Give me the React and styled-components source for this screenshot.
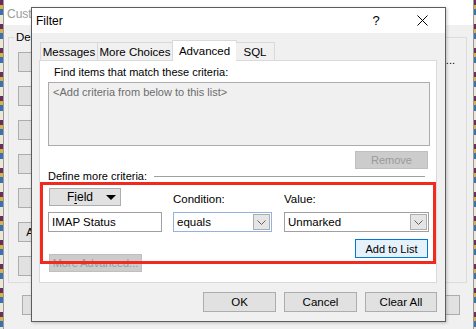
import React from "react";
import styled, { createGlobalStyle } from "styled-components";

const GlobalStyle = createGlobalStyle`
  html, body { margin: 0; padding: 0; }
  body {
    width: 476px;
    height: 329px;
    overflow: hidden;
    font-family: "Liberation Sans", Arial, sans-serif;
    font-size: 11px;
    color: #000;
  }
  * { box-sizing: border-box; }
`;

const Desktop = styled.div`
  position: relative;
  width: 476px;
  height: 329px;
  overflow: hidden;
  background: repeating-linear-gradient(
    180deg,
    #6a2d5c 0 5px,
    #d8b23c 5px 9px,
    #3b70b2 9px 15px,
    #ece6d6 15px 24px
  );
`;

/* ---------- window behind ---------- */

const BackWindow = styled.div`
  position: absolute;
  left: 3px;
  top: 0;
  width: 471px;
  height: 340px;
  border-left: 1px solid #9a9a9a;
  border-right: 1px solid #9a9a9a;
  background: #f0f0f0;
  display: flex;
  flex-direction: column;
`;

const BackTitle = styled.div`
  height: 25px;
  flex: none;
  background: #fff;
  padding-left: 3px;
  font-size: 12px;
  line-height: 28px;
  color: #9b9b9b;
`;

const BackBody = styled.div`
  padding: 5px 6px 0 4px;
  display: flex;
  flex-direction: column;
  gap: 12px;
`;

const GroupBox = styled.fieldset`
  margin: 0;
  height: 253px;
  border: 1px solid #dcdcdc;
  padding: 8px 9px 0 9px;
  display: flex;
  flex-direction: column;
  gap: 14px;
  background: #f0f0f0;

  legend {
    padding: 0 2px;
    margin-left: -4px;
    line-height: 14px;
    font-size: 11.5px;
  }
`;

const BackRow = styled.div`
  display: flex;
  align-items: center;
  justify-content: space-between;
  height: 20px;
`;

const BackButton = styled.div`
  width: 130px;
  height: 20px;
  border: 1px solid #adadad;
  background-color: #e1e1e1;
  display: flex;
  align-items: center;
  justify-content: center;
  white-space: nowrap;
  overflow: hidden;
`;

const Ellipsis = styled.span`
  margin-right: 2px;
  padding-bottom: 4px;
`;

const BackFooter = styled.div`
  display: flex;
  justify-content: space-between;
  padding: 0 7px 0 14px;
`;

/* ---------- filter dialog ---------- */

const Dialog = styled.div`
  position: absolute;
  left: 31px;
  top: 7px;
  width: 415px;
  height: 315px;
  border: 1px solid #5c5c5c;
  background: #f0f0f0;
  box-shadow: 1px 1px 3px rgba(0, 0, 0, 0.22);
  display: flex;
  flex-direction: column;
`;

const TitleBar = styled.div`
  height: 25px;
  flex: none;
  background: #fff;
  display: flex;
  align-items: center;
`;

const Title = styled.span`
  flex: 1;
  padding-left: 4px;
  font-size: 12px;
`;

const CaptionButton = styled.div`
  width: 46px;
  height: 25px;
  display: flex;
  align-items: center;
  justify-content: center;
  font-size: 13px;
`;

const DialogBody = styled.div`
  flex: 1;
  display: flex;
  flex-direction: column;
  padding: 7px 8px 9px 7px;
`;

const TabList = styled.div`
  display: flex;
  align-items: flex-end;
  height: 20px;
  padding-left: 1px;
  position: relative;
  z-index: 1;
`;

const Tab = styled.div`
  width: ${(p) => p.$w}px;
  height: ${(p) => (p.$active ? 21 : 18)}px;
  margin-bottom: ${(p) => (p.$active ? -1 : 0)}px;
  margin-left: ${(p) => (p.$active ? -1 : 0)}px;
  margin-right: ${(p) => (p.$active ? -1 : 0)}px;
  border: 1px solid #d9d9d9;
  border-bottom: none;
  border-left: ${(p) => (p.$first || p.$active ? "1px solid #d9d9d9" : "none")};
  background: ${(p) => (p.$active ? "#fff" : "#f0f0f0")};
  display: flex;
  align-items: center;
  justify-content: center;
  padding-top: ${(p) => (p.$active ? 0 : 1)}px;
  font-size: 11.5px;
  white-space: nowrap;
`;

const Panel = styled.div`
  flex: 1;
  background: #fff;
  border: 1px solid #d9d9d9;
  padding: 4px 6px 9px 8px;
  display: flex;
  flex-direction: column;
`;

const Caption = styled.div`
  line-height: 15px;
  height: 15px;
  padding-left: 6px;
  margin-bottom: 2px;
`;

const CriteriaList = styled.div`
  height: 64px;
  flex: none;
  border: 1px solid #acacac;
  background: #f0f0f0;
  color: #6d6d6d;
  padding: 2px 4px;
  line-height: 15px;
`;

const PushButton = styled.div`
  width: ${(p) => p.$w}px;
  height: ${(p) => p.$h || 20}px;
  flex: none;
  border: 1px solid
    ${(p) => (p.$disabled ? "#bfbfbf" : p.$default ? "#0078d7" : "#adadad")};
  background: ${(p) =>
    p.$disabled ? "#cccccc" : p.$default ? "#e5f1fb" : "#e1e1e1"};
  color: ${(p) => (p.$disabled ? "#9a9a9a" : "#000")};
  display: flex;
  align-items: center;
  justify-content: center;
  white-space: nowrap;
  overflow: hidden;
`;

const RemoveButton = styled(PushButton)`
  align-self: flex-end;
  margin: 5px 2px 0 0;
`;

const SectionHeading = styled.div`
  height: 14px;
  display: flex;
  align-items: center;
  padding-right: 5px;
  white-space: nowrap;

  &::after {
    content: "";
    flex: 1;
    height: 1px;
    margin-left: 7px;
    background: #a0a0a0;
  }
`;

const CriteriaGrid = styled.div`
  position: relative;
  margin-top: 5px;
  display: grid;
  grid-template-columns: 114px 100px 145px;
  grid-template-rows: 18px 20px 34px;
  column-gap: 11px;
  row-gap: 6px;

  &::after {
    content: "";
    position: absolute;
    top: -6px;
    left: -8px;
    right: -6px;
    bottom: 8px;
    border: 3px solid #f02a1f;
    pointer-events: none;
  }
`;

const FieldButton = styled.div`
  width: 72px;
  margin-left: 1px;
  height: 18px;
  border: 1px solid #adadad;
  background: #e1e1e1;
  display: flex;
  align-items: center;
  padding-left: 17px;
  font-size: 12px;

  u { text-decoration-thickness: 1px; text-underline-offset: 2px; }
`;

const DownTriangle = styled.span`
  margin-left: auto;
  margin-right: 4px;
  width: 0;
  height: 0;
  border-left: 5px solid transparent;
  border-right: 5px solid transparent;
  border-top: 5px solid #000;
`;

const FieldLabel = styled.div`
  align-self: end;
  line-height: 14px;
  font-size: 11.5px;
`;

const TextBox = styled.div`
  width: ${(p) => p.$w}px;
  height: 20px;
  border: 1px solid ${(p) => (p.$focus ? "#94b2e0" : "#a0a0a0")};
  background: #fff;
  display: flex;
  align-items: center;
  padding-left: 3px;
  font-size: 11.5px;
`;

const ComboText = styled.span`
  flex: 1;
`;

const DropButton = styled.div`
  width: 17px;
  height: 16px;
  margin: 1px;
  border: 1px solid #adadad;
  background: #e5e5e5;
  display: flex;
  align-items: center;
  justify-content: center;
`;

const LastRow = styled.div`
  grid-column: ${(p) => p.$col};
  margin-top: 1px;
  display: flex;
  align-items: ${(p) => p.$align};
  justify-content: ${(p) => p.$justify};
  padding: 0 1px;
`;

const Footer = styled.div`
  margin-top: 9px;
  display: flex;
  justify-content: flex-end;
  gap: 8px;
  font-size: 11.5px;
`;

function Chevron() {
  return (
    <svg width="9" height="5" viewBox="0 0 9 5">
      <path d="M0.5 0.5 L4.5 4.5 L8.5 0.5" fill="none" stroke="#606060" strokeWidth="1" />
    </svg>
  );
}

function CloseGlyph() {
  return (
    <svg width="11" height="11" viewBox="0 0 11 11">
      <path d="M0.5 0.5 L10.5 10.5 M10.5 0.5 L0.5 10.5" stroke="#000" strokeWidth="1" />
    </svg>
  );
}

function Combo({ w, value, focus }) {
  return (
    <TextBox $w={w} $focus={focus}>
      <ComboText>{value}</ComboText>
      <DropButton>
        <Chevron />
      </DropButton>
    </TextBox>
  );
}

const backButtons = [
  "Columns...",
  "Group By...",
  "Sort...",
  "Filter...",
  "Other Settings...",
  "Automatic Formatting...",
  "Format Columns...",
];

const tabs = [
  { label: "Messages", w: 58 },
  { label: "More Choices", w: 75 },
  { label: "Advanced", w: 65, active: true },
  { label: "SQL", w: 39 },
];

export default function App() {
  return (
    <>
      <GlobalStyle />
      <Desktop>
        <BackWindow>
          <BackTitle>Customize View: Compact</BackTitle>
          <BackBody>
            <GroupBox>
              <legend>Description</legend>
              {backButtons.map((b, i) => (
                <BackRow key={b}>
                  <BackButton>{b}</BackButton>
                  {i === 0 && <Ellipsis>...</Ellipsis>}
                </BackRow>
              ))}
            </GroupBox>
            <BackFooter>
              <BackButton>Reset Current View</BackButton>
              <BackButton>OK</BackButton>
            </BackFooter>
          </BackBody>
        </BackWindow>

        <Dialog>
          <TitleBar>
            <Title>Filter</Title>
            <CaptionButton>?</CaptionButton>
            <CaptionButton>
              <CloseGlyph />
            </CaptionButton>
          </TitleBar>
          <DialogBody>
            <TabList>
              {tabs.map((t, i) => (
                <Tab key={t.label} $w={t.w} $active={t.active} $first={i === 0}>
                  {t.label}
                </Tab>
              ))}
            </TabList>
            <Panel>
              <Caption>Find items that match these criteria:</Caption>
              <CriteriaList>&lt;Add criteria from below to this list&gt;</CriteriaList>
              <RemoveButton $w={73} $h={18} $disabled>
                Remove
              </RemoveButton>
              <SectionHeading>Define more criteria:</SectionHeading>
              <CriteriaGrid>
                <FieldButton>
                  <span>
                    F<u>i</u>eld
                  </span>
                  <DownTriangle />
                </FieldButton>
                <FieldLabel>Condition:</FieldLabel>
                <FieldLabel>Value:</FieldLabel>

                <TextBox $w={114}>IMAP Status</TextBox>
                <Combo w={99} value="equals" focus />
                <Combo w={145} value="Unmarked" />

                <LastRow $col="1" $align="flex-end" $justify="flex-start">
                  <PushButton $w={93} $h={18} $disabled>
                    More Advanced...
                  </PushButton>
                </LastRow>
                <LastRow $col="3" $align="flex-start" $justify="flex-end">
                  <PushButton $w={73} $h={19} $default>
                    Add to List
                  </PushButton>
                </LastRow>
              </CriteriaGrid>
            </Panel>
            <Footer>
              <PushButton $w={73}>OK</PushButton>
              <PushButton $w={73}>Cancel</PushButton>
              <PushButton $w={72}>Clear All</PushButton>
            </Footer>
          </DialogBody>
        </Dialog>
      </Desktop>
    </>
  );
}
